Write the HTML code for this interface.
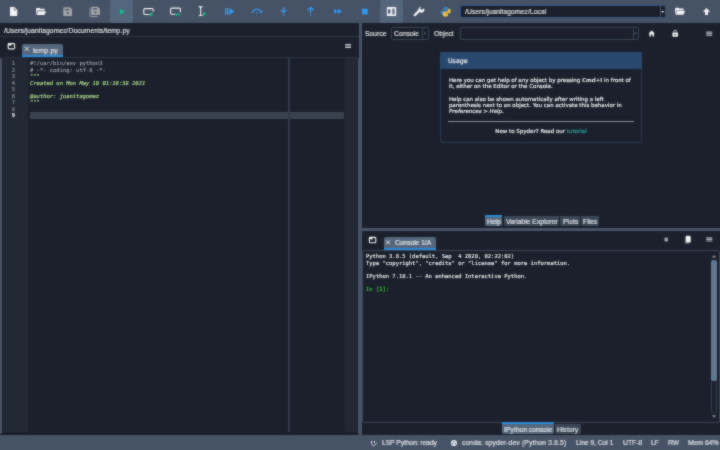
<!DOCTYPE html>
<html><head><meta charset="utf-8"><title>Spyder</title>
<style>
html,body{margin:0;padding:0;}
body{width:720px;height:450px;overflow:hidden;background:#1b212c;position:relative;font-family:"Liberation Sans",sans-serif;color:#e6e8ea;}
.abs,#root *{position:absolute;box-sizing:border-box;}
#root b{-webkit-text-stroke:0.05px;}
#root{position:absolute;left:0;top:0;width:720px;height:450px;overflow:hidden;}
.t{white-space:pre;line-height:1;}
.t,.mono,#utext{will-change:transform;-webkit-text-stroke:0.2px;}
.mono{-webkit-text-stroke:0.1px;}
.ui{-webkit-text-stroke:0.14px;}
.ui{font-size:7.200px;color:#eef0f2;transform:scaleX(.944);transform-origin:0 50%;}
.mono{font-family:"DejaVu Sans Mono","Liberation Mono",monospace;font-size:5.480px;white-space:pre;line-height:6.5px;}
#toolbar{left:0;top:0;width:720px;height:22.5px;background:#465266;}
.hl{background:#55667c;border-radius:2px;}
#status{left:0;top:435.300px;width:720px;height:16px;background:#465266;}
.tab{background:#55667c;border-radius:2px 2px 0 0;border-bottom:2px solid #2a8ad8;}
.btab{background:#3b4757;border-radius:0 0 2px 2px;}
.btab.sel{background:#55667c;border-top:2px solid #2a8ad8;}
svg{overflow:visible}
</style></head><body><div id="root">

<!-- TOOLBAR -->
<div id="toolbar"></div>
<div class="hl" style="left:110px;top:0;width:23px;height:23px;"></div>
<div class="hl" style="left:380px;top:0;width:23px;height:23px;"></div>


<!-- path combobox -->
<div style="left:459.600px;top:5px;width:206.300px;height:13px;background:#1b212c;border:1px solid #2f547f;border-radius:2px;"></div>
<div style="left:659.5px;top:6px;width:1px;height:11px;background:#465266;"></div>
<div class="t ui" style="left:464.600px;top:8.300px;letter-spacing:.06px;">/Users/juanitagomez/Local</div>

<svg id="icons" style="left:0;top:0;" width="720" height="23" viewBox="0 0 720 23">
<!-- new file -->
<path d="M10.6 7h3.6l3.1 3.1v5.3a.6.6 0 0 1-.6.6h-6.100a.6.6 0 0 1-.6-.6v-7.800a.6.6 0 0 1 .6-.6z" fill="#f4f5f7"/>
<path d="M14.2 8.300v1.800h1.800" fill="none" stroke="#465266" stroke-width=".7"/>
<!-- open folder -->
<path d="M36.600 7.900h3l.9.900h3.700a.5.5 0 0 1 .5.500v1.300h-6.900l-1.700 3.600v-5.800a.5.500 0 0 1 .5-.500z" fill="#f4f5f7"/>
<path d="M38.200 11.200h7.900l-1.700 3.800h-8z" fill="#f4f5f7"/>
<!-- save -->
<path d="M64 7.300h6l2 2v6a.7.700 0 0 1-.7.700h-7.300a.7.700 0 0 1-.7-.7v-7.300a.7.700 0 0 1 .7-.7z" fill="#a3a5a9"/>
<rect x="65" y="9" width="4.200" height="1.300" fill="#465266"/>
<circle cx="67.700" cy="13.100" r="1.100" fill="#465266"/>
<!-- save all -->
<path d="M90 8.400v7.600a.6.600 0 0 0 .6.600h7.200" fill="none" stroke="#a3a5a9" stroke-width=".9"/>
<path d="M91.900 6.700h6l2 2v5.700a.7.700 0 0 1-.7.700h-7.300a.7.700 0 0 1-.7-.7v-7a.7.700 0 0 1 .7-.7z" fill="#a3a5a9"/>
<rect x="93" y="8.200" width="4" height="1.300" fill="#465266"/>
<circle cx="95.500" cy="12.300" r="1.100" fill="#465266"/>
<!-- run -->
<path d="M120 9v5.600l4.800-2.800z" fill="#12c08e"/>
<!-- run cell -->
<path d="M149.500 14.500h-4.500a1.200 1.200 0 0 1-1.200-1.200v-3.500a1.200 1.200 0 0 1 1.200-1.200h7a1.200 1.200 0 0 1 1.200 1.200v2" fill="none" stroke="#f4f5f7" stroke-width="1.100"/>
<path d="M150 12.300v4l3.600-2z" fill="#12c08e"/>
<!-- run cell advance -->
<path d="M175.500 14.200h-3.700a1.200 1.200 0 0 1-1.200-1.200v-3.700a1.200 1.200 0 0 1 1.200-1.200h7.400a1.200 1.200 0 0 1 1.200 1.200v3" fill="none" stroke="#f4f5f7" stroke-width="1.100"/>
<path d="M176 13.300v2.600l2.200-1.300zM178.300 13.300v2.600l2.200-1.300z" fill="#12c08e"/>
<!-- run selection -->
<path d="M198.800 6.600c1 0 1.600.3 1.900.8c.3-.5.900-.8 1.900-.8M198.800 15.800c1 0 1.600-.3 1.900-.8c.3.500.9.800 1.900.8M200.700 7.200v8" fill="none" stroke="#f4f5f7" stroke-width="1.100"/>
<path d="M203 12v4l3.600-2z" fill="#12c08e"/>
<!-- debug -->
<path d="M225 8.200h1.200v6.600h-1.200zM226.800 8.200h1.200v6.600h-1.200zM228.600 8.200h1v6.600h-1zM230 8.200l4.500 3.300l-4.500 3.300z" fill="#3498ec"/>
<!-- step over -->
<path d="M252.500 12.800a4.400 4.400 0 0 1 8.300-1.200" fill="none" stroke="#3498ec" stroke-width="1.250"/>
<path d="M262.300 10v2.900h-2.900z" fill="#3498ec"/>
<circle cx="256.600" cy="13" r=".8" fill="#3498ec"/>
<!-- step into -->
<path d="M283.600 7v5.500M280.700 9.800l2.900 2.900l2.900-2.900" fill="none" stroke="#3498ec" stroke-width="1.300"/>
<circle cx="283.600" cy="15" r=".9" fill="#3498ec"/>
<!-- step return -->
<path d="M310.600 13.500v-6M307.600 10.300l3-3l3 3" fill="none" stroke="#3498ec" stroke-width="1.250"/>
<circle cx="310.600" cy="15.300" r=".8" fill="#3498ec"/>
<!-- continue -->
<path d="M334.200 8.800v5.200l3.800-2.600zM338 8.800v5.200l3.900-2.600z" fill="#3498ec"/>
<!-- stop -->
<rect x="362" y="8.600" width="5.700" height="5.800" fill="#3498ec"/>
<!-- pane -->
<rect x="386.800" y="7.100" width="9.400" height="8.900" rx=".9" fill="#f4f5f7"/>
<path d="M387.900 9.200h1.600a1 1 0 0 1 1 1v2.600a1 1 0 0 1-1 1h-1.600z" fill="#55667c"/>
<rect x="392.400" y="8.600" width="2.100" height="5.900" fill="#55667c"/>
<!-- wrench -->
<path d="M414.800 15.100l5-5" stroke="#f4f5f7" stroke-width="2.300" stroke-linecap="round" fill="none"/>
<path d="M424 8.200a3 3 0 1 1-2.700-1.500l-1.400 1.900l1.700 1.500z" fill="#f4f5f7"/>
<!-- python -->
<path d="M445.500 7c-1.800 0-2.300.7-2.300 1.600v1.100h2.400v.5h-3.500c-1 0-1.500.9-1.500 2.300s.6 2.200 1.500 2.200h.9v-1.300c0-1 .8-1.700 1.700-1.700h2.400c.8 0 1.300-.6 1.300-1.400v-1.700c0-.9-.9-1.600-2.900-1.600z" fill="#3c7fc0"/>
<path d="M445.700 16.500c1.800 0 2.300-.7 2.300-1.600v-1.100h-2.400v-.5h3.500c1 0 1.500-.9 1.500-2.300s-.6-2.200-1.500-2.200h-.9v1.300c0 1-.8 1.700-1.700 1.700h-2.400c-.8 0-1.300.6-1.300 1.400v1.700c0 .9.900 1.600 2.900 1.600z" fill="#f2c53d"/>
<!-- combobox arrow -->
<path d="M661 10.900l1.700 1.800l1.700-1.800z" fill="#f4f5f7"/>
<!-- folder right -->
<path d="M675.600 7.700h3l.9.900h3.700a.5.500 0 0 1 .5.500v1.300h-6.900l-1.700 3.600v-5.800a.5.500 0 0 1 .5-.500z" fill="#f4f5f7"/>
<path d="M677.200 11h7.900l-1.700 3.800h-8z" fill="#f4f5f7"/>
<!-- up arrow -->
<path d="M706.500 8l3.600 3.700h-2.100v3.300h-3v-3.300h-2.100z" fill="#f4f5f7"/>
</svg>
<!-- file path bar -->
<div class="t ui" style="left:4.4px;top:27.250px;letter-spacing:.045px;">/Users/juanitagomez/Documents/temp.py</div>
<div style="left:0;top:36px;width:359px;height:1px;background:#2c3442;"></div>

<!-- editor tab bar -->
<div class="tab" style="left:22px;top:43.5px;width:41.3px;height:13px;"></div>
<div class="t ui" style="left:33px;top:46.700px;letter-spacing:.1px;">temp.py</div>

<!-- editor -->
<div id="editor" style="left:1px;top:56.700px;width:357.500px;height:377px;border:1px solid #181d27;border-top-color:#2a3240;border-radius:2px;background:#1b212c;"></div>
<div style="left:0;top:57.500px;width:1.500px;height:376px;background:#4a5464;border-radius:1px;"></div>
<div style="left:357.800px;top:57.500px;width:1.500px;height:376.500px;background:#485368;border-radius:1px 0 0 1px;"></div>
<div style="left:2.800px;top:58px;width:24.900px;height:374px;background:#222834;"></div>
<div style="left:345px;top:58px;width:12.300px;height:374px;background:#222834;"></div>
<div style="left:29.5px;top:112px;width:314.5px;height:6.7px;background:#3a424f;"></div>
<div style="left:288.300px;top:58px;width:1.500px;height:374px;background:#303a48;"></div>
<div class="mono" id="lnums" style="left:2px;top:60px;width:13px;text-align:right;color:#959ca6;">1
2
3
4
5
6
7
8
<b style="position:static;color:#fff">9</b></div>
<div class="mono" id="code" style="left:29.600px;top:59.700px;color:#a4abb5;">#!/usr/bin/env python3
# -*- coding: utf-8 -*-
<i style="position:static;color:#bdeb95">"""
Created on Mon May 10 01:16:58 2021

@author: juanitagomez
"""</i>
</div>

<!-- splitters -->
<div style="left:358.800px;top:22.500px;width:3px;height:412.500px;background:#485368;"></div>
<div style="left:361px;top:228.200px;width:359px;height:2.500px;background:#485368;"></div>

<!-- HELP PANE -->
<div class="t ui" style="left:365px;top:29.750px;">Source</div>
<div style="left:390.800px;top:27px;width:38.200px;height:13px;border:1px solid #3a4555;border-radius:2px;"></div>
<div style="left:421.5px;top:28px;width:1px;height:11px;background:#3a4555;"></div>
<div class="t ui" style="left:393.500px;top:29.750px;">Console</div>
<div class="t ui" style="left:434px;top:29.750px;">Object</div>
<div style="left:459.5px;top:27px;width:179px;height:13px;border:1px solid #3a4555;border-radius:2px;"></div>
<div style="left:632.5px;top:28px;width:1px;height:11px;background:#3a4555;"></div>

<div id="usage" style="left:439.900px;top:51.600px;width:202.200px;height:91.200px;border:.8px solid #283a56;border-radius:2px;background:#1b212c;"></div>
<div style="left:440px;top:51.600px;width:202px;height:17.400px;background:#29496f;border-radius:2px 2px 0 0;"></div>
<div class="t" style="left:448px;top:57.900px;font-family:'DejaVu Sans',sans-serif;font-size:6.3px;color:#e8eaec;">Usage</div>
<div id="utext" style="left:448.600px;top:77px;width:200px;font-family:'DejaVu Sans',sans-serif;font-size:5.480px;line-height:6.150px;color:#e8eaec;white-space:pre;">Here you can get help of any object by pressing <b style="position:static">Cmd+I</b> in front of
it, either on the Editor or the Console.</div>
<div class="t" style="left:448.600px;top:96.300px;width:200px;font-family:'DejaVu Sans',sans-serif;font-size:5.480px;line-height:6.150px;color:#e8eaec;white-space:pre;">Help can also be shown automatically after writing a left
parenthesis next to an object. You can activate this behavior in
<i style="position:static">Preferences &gt; Help</i>.</div>
<div style="left:448.200px;top:120.800px;width:186px;height:1.300px;background:#8a919b;"></div>
<div class="t" style="left:440px;top:128.900px;width:202px;text-align:center;font-family:'DejaVu Sans',sans-serif;font-size:5.500px;color:#e8eaec;">New to Spyder? Read our <span style="position:static;color:#2aa198">tutorial</span></div>

<!-- help bottom tabs -->
<div class="btab sel" style="left:484.800px;top:215.400px;width:17.700px;height:11px;"></div>
<div class="btab" style="left:503.600px;top:216.400px;width:55.200px;height:10px;"></div>
<div class="btab" style="left:560.200px;top:216.400px;width:19.600px;height:10px;"></div>
<div class="btab" style="left:581px;top:216.400px;width:18px;height:10px;"></div>
<div class="t ui" style="left:487px;top:218.400px;">Help</div>
<div class="t ui" style="left:506px;top:218.400px;">Variable Explorer</div>
<div class="t ui" style="left:562.800px;top:218.400px;">Plots</div>
<div class="t ui" style="left:583.400px;top:218.400px;">Files</div>

<!-- CONSOLE PANE -->
<div class="tab" style="left:383.700px;top:237px;width:52px;height:13px;"></div>
<div class="t ui" style="left:394.800px;top:239.450px;letter-spacing:-.09px;">Console 1/A</div>
<div id="console" style="left:362px;top:250px;width:357.500px;height:173px;border:1px solid #3c4656;border-radius:2px;"></div>
<div style="left:711.200px;top:259.500px;width:5.600px;height:153.500px;border:.6px solid #36404f;border-radius:2.500px;"></div>
<div style="left:711.300px;top:260.200px;width:5.400px;height:121.200px;background:#627992;border-radius:2.500px;"></div>
<div class="mono" style="left:365.700px;top:253px;color:#fff;">Python 3.8.5 (default, Sep  4 2020, 02:22:02)
Type "copyright", "credits" or "license" for more information.

IPython 7.18.1 -- An enhanced Interactive Python.

<span style="position:static;color:#38d238">In [<b style="position:static">1</b>]:</span></div>

<!-- console bottom tabs -->
<div class="btab sel" style="left:501.700px;top:422.300px;width:52.100px;height:12px;"></div>
<div class="btab" style="left:555px;top:423.800px;width:25.800px;height:10.500px;"></div>
<div class="t ui" style="left:504.200px;top:425.700px;">IPython console</div>
<div class="t ui" style="left:557.400px;top:425.700px;">History</div>

<!-- STATUS BAR -->
<div id="status"></div>
<div class="t ui" style="left:382px;top:439.250px;letter-spacing:-.1px;">LSP Python: ready</div>
<div class="t ui" style="left:462px;top:439.250px;letter-spacing:.13px;">conda: spyder-dev (Python 3.8.5)</div>
<div class="t ui" style="left:576.200px;top:439.250px;letter-spacing:-.08px;">Line 9, Col 1</div>
<div class="t ui" style="left:623px;top:439.250px;">UTF-8</div>
<div class="t ui" style="left:651.200px;top:439.250px;letter-spacing:-.2px;">LF</div>
<div class="t ui" style="left:667.500px;top:439.250px;letter-spacing:-.3px;">RW</div>
<div class="t ui" style="left:687.500px;top:439.250px;">Mem 64%</div>

<svg id="icons2" style="left:0;top:0;" width="720" height="450" viewBox="0 0 720 450">
<!-- editor tab close -->
<path d="M24.700 46.700l4.100 4.100M28.800 46.700l-4.100 4.100" stroke="#f4f5f7" stroke-width=".9" fill="none"/>
<!-- browse tabs -->
<rect x="8.200" y="43.600" width="6.400" height="5.300" rx=".8" fill="none" stroke="#f4f5f7" stroke-width="1.100"/>
<path d="M8.300 43.800h3.200v1.700h-3.200z" fill="#f4f5f7"/>
<!-- editor hamburger -->
<path d="M345.200 44h5.800v1.100h-5.800zM345.200 45.500h5.800v1.100h-5.800zM345.200 47h5.800v1.100h-5.800z" fill="#c9cdd2"/>
<!-- help: combobox arrows -->
<path d="M423.800 32.800l1.200 1.300l1.200-1.300z" fill="#8d949e"/>
<path d="M634.400 32.800l1.200 1.300l1.200-1.300z" fill="#8d949e"/>
<!-- home -->
<path d="M651.700 30.600l3.200 3h-.9v2.800h-1.500v-1.800h-1.600v1.800h-1.500v-2.800h-.9z" fill="#f4f5f7"/>
<!-- lock -->
<path d="M673.700 32.600v-.8a1.500 1.500 0 0 1 3 0v.8" fill="none" stroke="#f4f5f7" stroke-width=".8"/>
<rect x="672.400" y="32.500" width="5.600" height="4.200" rx=".6" fill="#f4f5f7"/>
<rect x="674.500" y="34.200" width="1.400" height="1" fill="#1b212c"/>
<!-- help hamburger -->
<path d="M706.200 31.500h6v1.200h-6zM706.200 33.100h6v1.200h-6zM706.200 34.700h6v1.200h-6z" fill="#a4a9b0"/>
<!-- console browse tabs -->
<rect x="369.400" y="237.400" width="6.400" height="5.300" rx=".8" fill="none" stroke="#f4f5f7" stroke-width="1.100"/>
<path d="M369.500 237.600h3.200v1.700h-3.200z" fill="#f4f5f7"/>
<!-- console tab close -->
<path d="M386.100 240.400l3.800 3.800M389.900 240.400l-3.800 3.800" stroke="#f4f5f7" stroke-width=".9" fill="none"/>
<!-- console stop -->
<rect x="664.400" y="237.700" width="3.600" height="3.700" fill="#9fa4ab"/>
<!-- console clear -->
<path d="M686.400 235.700h3.300l1 1v5.400a.5.500 0 0 1-.5.500h-3.800a.5.500 0 0 1-.5-.5v-5.900a.5.500 0 0 1 .5-.5z" fill="#f4f5f7"/>
<path d="M685.200 237v6.200h4" fill="none" stroke="#b0b4ba" stroke-width=".6"/>
<!-- scroll arrows -->
<path d="M711.600 257.600l2.400-2.500l2.400 2.500z" fill="#7d858f"/>
<path d="M711.700 415.300l2.400 2.400l2.400-2.400z" fill="#7d858f"/>
<!-- LSP icon -->
<rect x="371" y="441" width="1.100" height="1.900" fill="#f4f5f7"/><rect x="373.900" y="441" width="1.100" height="1.900" fill="#f4f5f7"/>
<path d="M371.400 443.400c.3 1.500 1.300 2.300 2.400 2.500l3-2.700" fill="none" stroke="#e4e7ea" stroke-width=".9"/>
<!-- conda icon -->
<circle cx="454" cy="443" r="3.100" fill="#e6e9ed"/>
<circle cx="454" cy="441.600" r=".6" fill="#465266"/><circle cx="452.500" cy="443.700" r=".6" fill="#465266"/><circle cx="455.500" cy="443.700" r=".6" fill="#465266"/><circle cx="454" cy="443.300" r=".45" fill="#465266"/>
<!-- console hamburger -->
<path d="M706.300 237.200h6v1.200h-6zM706.300 238.800h6v1.200h-6zM706.300 240.400h6v1.200h-6z" fill="#a4a9b0"/>
</svg>
</div><div id="soft" style="position:absolute;left:0;top:0;width:720px;height:450px;backdrop-filter:blur(0.8px);opacity:.5;pointer-events:none;"></div></body></html>
